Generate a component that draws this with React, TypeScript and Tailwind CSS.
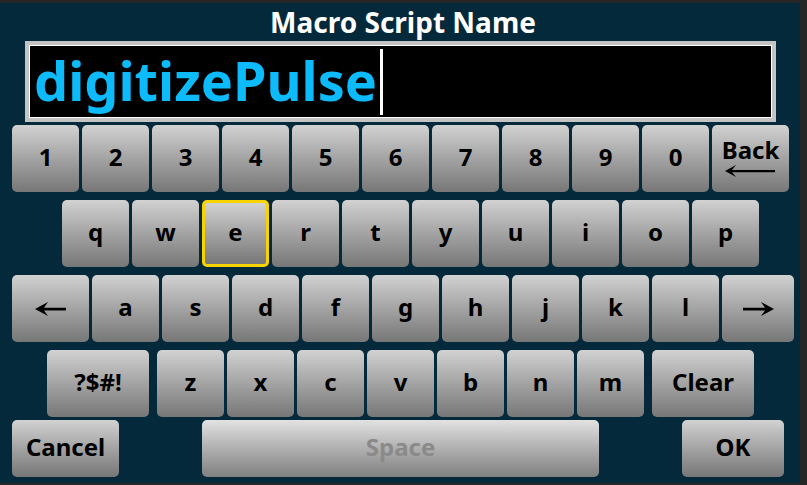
import React from "react"

const font = { fontFamily: '"Noto Sans", "Open Sans", "DejaVu Sans", sans-serif' }

function Key({ label, w = "w-[67px]", h = "h-[67px]", active = false, dim = false, children }: {
    label?: string
    w?: string
    h?: string
    active?: boolean
    dim?: boolean
    children?: React.ReactNode
}) {
    return (
        <div
            className={`${w} ${h} shrink-0 rounded-[5px] bg-gradient-to-b flex items-center justify-center font-bold text-[24px] leading-none ${dim ? "from-[#e2e2e2] to-[#808080] text-[#8a8a8a]" : "from-[#d2d2d2] to-[#777777] text-black"} ${active ? "border-[3px] border-[#f7d400]" : ""}`}
        >
            {children ?? <span className="-mt-[3px]">{label}</span>}
        </div>
    )
}

function LeftArrow() {
    return (
        <svg width="32" height="16" viewBox="0 0 32 16">
            <path d="M0 8 L13 1 L9 6.8 L31 6.8 L31 9.4 L9 9.4 L13 15 Z" fill="#000" />
        </svg>
    )
}

function RightArrow() {
    return (
        <svg width="32" height="16" viewBox="0 0 32 16">
            <path d="M32 8 L19 1 L23 6.8 L1 6.8 L1 9.4 L23 9.4 L19 15 Z" fill="#000" />
        </svg>
    )
}

export default function App() {
    const row1 = ["1", "2", "3", "4", "5", "6", "7", "8", "9", "0"]
    const row2 = ["q", "w", "e", "r", "t", "y", "u", "i", "o", "p"]
    const row3 = ["a", "s", "d", "f", "g", "h", "j", "k", "l"]
    const row4 = ["z", "x", "c", "v", "b", "n", "m"]

    return (
        <div className="w-[807px] h-[485px] bg-[#262626] pt-[3px] pr-[7px] pb-[2px]" style={font}>
            <div className="w-full h-full bg-[#03293a] flex flex-col">
                <div className="h-[38px] flex items-center justify-center text-white font-bold text-[28px] leading-none pl-[6px]">
                    Macro Script Name
                </div>
                <div className="ml-[25px] w-[751px] h-[81px] border-[4px] border-[#c4c4c4]">
                    <div className="w-full h-full border border-white bg-black flex items-center pl-[4px]">
                        <span className="text-[#0dbbfa] font-bold text-[54px] leading-none -mt-[4px]">digitizePulse</span>
                        <span className="inline-block w-[3px] h-[66px] bg-white ml-[3px] mt-[1px]" />
                    </div>
                </div>

                <div className="flex gap-[3px] pl-[12px] mt-[3px]">
                    {row1.map((k) => <Key key={k} label={k} />)}
                    <Key w="w-[77px]">
                        <div className="flex flex-col items-center leading-none -mt-[3px]">
                            <span className="text-[24px]">Back</span>
                            <div className="mt-[3px]">
                                <svg width="50" height="12" viewBox="0 0 50 12">
                                    <path d="M0 6 L11 0 L7 4.9 L50 4.9 L50 7.3 L7 7.3 L11 12 Z" fill="#000" />
                                </svg>
                            </div>
                        </div>
                    </Key>
                </div>

                <div className="flex gap-[3px] pl-[62px] mt-[8px]">
                    {row2.map((k) => <Key key={k} label={k} active={k === "e"} />)}
                </div>

                <div className="flex gap-[3px] pl-[12px] mt-[8px]">
                    <Key w="w-[77px]"><LeftArrow /></Key>
                    {row3.map((k) => <Key key={k} label={k} />)}
                    <Key w="w-[72px]"><RightArrow /></Key>
                </div>

                <div className="flex gap-[3px] pl-[47px] mt-[8px]">
                    <Key w="w-[102px]" label="?$#!" />
                    <div className="w-[2px] shrink-0" />
                    {row4.map((k) => <Key key={k} label={k} />)}
                    <div className="w-[2px] shrink-0" />
                    <Key w="w-[102px]" label="Clear" />
                </div>

                <div className="flex pl-[12px] mt-[3px]">
                    <Key w="w-[107px]" h="h-[57px]" label="Cancel" />
                    <div className="ml-[83px]">
                        <Key w="w-[397px]" h="h-[57px]" label="Space" dim />
                    </div>
                    <div className="ml-[83px]">
                        <Key w="w-[102px]" h="h-[57px]" label="OK" />
                    </div>
                </div>
            </div>
        </div>
    )
}
